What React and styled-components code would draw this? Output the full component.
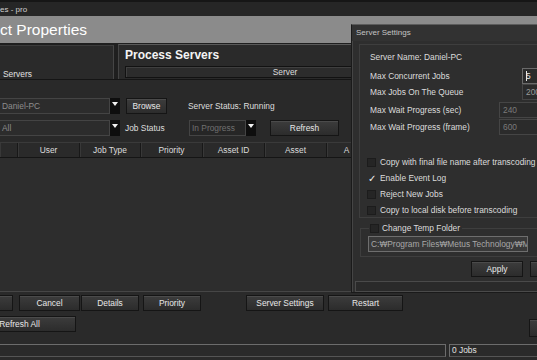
import React from "react";
import styled, { createGlobalStyle } from "styled-components";

const Global = createGlobalStyle`
  html, body {
    margin: 0;
    padding: 0;
    background: #2a2a2a;
  }
  body {
    font-family: "Liberation Sans", Arial, sans-serif;
    font-size: 8.4px;
    color: #dcdcdc;
  }
`;

function Arrow() {
  return (
    <ArrowBox>
      <svg width="8" height="8" viewBox="0 0 8 8">
        <polygon points="1,2 7,2 4,6" fill="#f2f2f2" />
      </svg>
    </ArrowBox>
  );
}

function Select({ value, width, dim }) {
  return (
    <SelectWrap style={{ width }}>
      <SelectField $dim={dim}>{value}</SelectField>
      <Arrow />
    </SelectWrap>
  );
}

function Check({ checked, label }) {
  return (
    <CheckRow>
      {checked ? <Tick>✓</Tick> : <Box />}
      <span>{label}</span>
    </CheckRow>
  );
}

const columns = [
  { label: "", width: 18 },
  { label: "User", width: 62 },
  { label: "Job Type", width: 61 },
  { label: "Priority", width: 62 },
  { label: "Asset ID", width: 62 },
  { label: "Asset", width: 62 },
  { label: "A", width: 40 },
];

function App() {
  return (
    <Screen>
      <Global />
      <TitleBar>es - pro</TitleBar>
      <Banner>ct Properties</Banner>

      <TopArea>
        <ServersPanel>
          <span>Servers</span>
        </ServersPanel>
        <ProcessPanel>
          <PanelTitle>Process Servers</PanelTitle>
          <ColumnHead>Server</ColumnHead>
        </ProcessPanel>
      </TopArea>

      <Controls>
        <Row>
          <Select value="Daniel-PC" width={120} />
          <Button $w={41} $ml={6}>Browse</Button>
          <Label $ml={21}>Server Status: Running</Label>
        </Row>
        <Row>
          <Select value="All" width={120} />
          <Label $ml={5} $w={64}>Job Status</Label>
          <Select value="In Progress" width={67} dim />
          <Button $w={69} $ml={14}>Refresh</Button>
        </Row>
      </Controls>

      <Table>
        <HeadRow>
          {columns.map((c, i) => (
            <HeadCell key={i} $w={c.width}>
              {c.label}
            </HeadCell>
          ))}
        </HeadRow>
        <TableBody />
      </Table>

      <ButtonRow>
        <Button $w={53} $ml={-40} />
        <Button $w={61} $ml={6}>Cancel</Button>
        <Button $w={58} $ml={1}>Details</Button>
        <Button $w={58} $ml={4}>Priority</Button>
        <Button $w={78} $ml={45}>Server Settings</Button>
        <Button $w={75} $ml={4}>Restart</Button>
      </ButtonRow>
      <ButtonRow $mt={5}>
        <Button $w={113} $ml={-37}>Refresh All</Button>
        <Button $w={30} $ml={453} $h={18} $mt={3} />
      </ButtonRow>

      <StatusBar>
        <StatusField $w={447} $ml={-1} />
        <StatusField $w={95}>0 Jobs</StatusField>
      </StatusBar>

      <Dialog>
        <DialogTitle>Server Settings</DialogTitle>
        <DialogContent>
          <GroupBox>
            <NameRow>Server Name: Daniel-PC</NameRow>
            <FieldRow $mt={4}>
              <span>Max Concurrent Jobs</span>
              <NumInput $w={40} $active>
                <Caret />5
              </NumInput>
            </FieldRow>
            <FieldRow $mt={0}>
              <span>Max Jobs On The Queue</span>
              <NumInput $w={40}>200</NumInput>
            </FieldRow>
            <FieldRow $mt={2}>
              <span>Max Wait Progress (sec)</span>
              <NumInput $w={63} $disabled>240</NumInput>
            </FieldRow>
            <FieldRow $mt={1}>
              <span>Max Wait Progress (frame)</span>
              <NumInput $w={63} $disabled>600</NumInput>
            </FieldRow>
            <Checks>
              <Check label="Copy with final file name after transcoding" />
              <Check checked label="Enable Event Log" />
              <Check label="Reject New Jobs" />
              <Check label="Copy to local disk before transcoding" />
            </Checks>
          </GroupBox>

          <TempGroup>
            <TempLegend>
              <Box />
              <span>Change Temp Folder</span>
            </TempLegend>
            <PathInput>C:₩Program Files₩Metus Technology₩Metus</PathInput>
          </TempGroup>

          <DialogButtons>
            <Button $w={52}>Apply</Button>
            <Button $w={52} $ml={7}>Cancel</Button>
          </DialogButtons>
        </DialogContent>
        <DialogFooter />
      </Dialog>
    </Screen>
  );
}

const Screen = styled.div`
  position: relative;
  width: 537px;
  height: 360px;
  overflow: hidden;
  background: #2a2a2a;
`;

const TitleBar = styled.div`
  height: 14px;
  border-top: 2px solid #161616;
  background: #262626;
  color: #cfcfcf;
  font-size: 8px;
  line-height: 15px;
  white-space: nowrap;
`;

const Banner = styled.div`
  height: 27px;
  background: #8b8b8b;
  color: #fff;
  font-size: 15.5px;
  line-height: 27px;
  white-space: nowrap;
`;

const TopArea = styled.div`
  display: flex;
  height: 36px;
  padding-top: 1px;
  box-sizing: border-box;
  background: #1f1f1f;
  gap: 4px;
`;

const ServersPanel = styled.div`
  width: 113px;
  margin-top: 1px;
  background: #2a2a2a;
  border-top: 1px solid #3c3c3c;
  border-right: 1px solid #454545;
  display: flex;
  align-items: flex-end;
  overflow: hidden;
  span {
    padding-left: 3px;
    margin-bottom: 0;
    line-height: 10px;
    color: #e0e0e0;
  }
`;

const ProcessPanel = styled.div`
  flex: 1;
  background: #2a2a2a;
  border-top: 1px solid #5a5a5a;
  border-left: 1px solid #444;
  padding-left: 6px;
  overflow: hidden;
`;

const PanelTitle = styled.div`
  font-size: 12px;
  font-weight: bold;
  color: #f4f4f4;
  height: 21px;
  line-height: 20px;
  white-space: nowrap;
`;

const ColumnHead = styled.div`
  width: 320px;
  height: 12px;
  box-sizing: border-box;
  border: 1px solid #121212;
  box-shadow: inset 1px 1px 0 #3f3f3f;
  background: #2c2c2c;
  text-align: center;
  line-height: 11px;
  color: #dcdcdc;
`;

const Controls = styled.div`
  height: 62px;
  box-sizing: border-box;
  border-top: 1px solid #151515;
  background: #292929;
  padding-top: 18px;
  display: flex;
  flex-direction: column;
  gap: 6px;
`;

const Row = styled.div`
  display: flex;
  align-items: center;
  height: 16px;
`;

const Label = styled.span`
  margin-left: ${(p) => p.$ml || 0}px;
  width: ${(p) => (p.$w ? `${p.$w}px` : "auto")};
  flex-shrink: 0;
  white-space: nowrap;
  color: #dedede;
`;

const SelectWrap = styled.div`
  display: flex;
  height: 16px;
  flex-shrink: 0;
`;

const SelectField = styled.div`
  flex: 1;
  box-sizing: border-box;
  background: ${(p) => (p.$dim ? "#262626" : "#2c2c2c")};
  border: 1px solid #444;
  border-left: ${(p) => (p.$dim ? "1px solid #444" : "none")};
  padding-left: 2px;
  line-height: 14px;
  color: ${(p) => (p.$dim ? "#707070" : "#8c8c8c")};
  white-space: nowrap;
  overflow: hidden;
`;

const ArrowBox = styled.div`
  width: 10px;
  background: #0e0e0e;
  display: flex;
  align-items: flex-start;
  justify-content: center;
  padding-top: 2px;
  box-sizing: border-box;
`;

const Button = styled.div`
  width: ${(p) => p.$w}px;
  height: ${(p) => p.$h || 16}px;
  margin-left: ${(p) => p.$ml || 0}px;
  margin-top: ${(p) => p.$mt || 0}px;
  flex-shrink: 0;
  box-sizing: border-box;
  background: linear-gradient(#3c3c3c, #2c2c2c);
  border: 1px solid #151515;
  box-shadow: inset 0 1px 0 #4b4b4b;
  color: #e8e8e8;
  text-align: center;
  line-height: 14px;
  white-space: nowrap;
`;

const Table = styled.div`
  margin-top: 1px;
  width: 360px;
  border-top: 1px solid #3a3a3a;
  border-bottom: 1px solid #464646;
`;

const HeadRow = styled.div`
  display: flex;
  height: 14px;
  background: #2a2a2a;
  border-bottom: 1px solid #151515;
`;

const HeadCell = styled.div`
  width: ${(p) => p.$w}px;
  flex-shrink: 0;
  box-sizing: border-box;
  border-right: 1px solid #181818;
  box-shadow: inset 1px 0 0 #383838;
  text-align: center;
  line-height: 14px;
  color: #dcdcdc;
`;

const TableBody = styled.div`
  height: 133px;
  background: #2d2d2d;
`;

const ButtonRow = styled.div`
  display: flex;
  margin-top: ${(p) => (p.$mt === undefined ? 3 : p.$mt)}px;
  height: 16px;
`;

const StatusBar = styled.div`
  display: flex;
  margin-top: 12px;
  gap: 3px;
`;

const StatusField = styled.div`
  width: ${(p) => p.$w}px;
  margin-left: ${(p) => p.$ml || 0}px;
  height: 13px;
  flex-shrink: 0;
  box-sizing: border-box;
  border: 1px solid #6c6c6c;
  border-bottom-color: #555;
  background: #2a2a2a;
  padding-left: 2px;
  line-height: 11px;
  color: #e0e0e0;
`;

const Dialog = styled.div`
  position: absolute;
  left: 351px;
  top: 24px;
  width: 230px;
  height: 269px;
  box-sizing: border-box;
  background: #2e2e2e;
  border: 1px solid #1a1a1a;
  border-top-color: #5c5c5c;
  box-shadow: inset 1px 0 0 #454545;
  display: flex;
  flex-direction: column;
`;

const DialogTitle = styled.div`
  height: 16px;
  padding-left: 4px;
  line-height: 16px;
  font-size: 8px;
  color: #c4c4c4;
  background: #323232;
`;

const DialogContent = styled.div`
  padding: 3px 0 0 7px;
`;

const GroupBox = styled.div`
  height: 174px;
  box-sizing: border-box;
  border: 1px solid #3e3e3e;
  border-right: none;
  padding: 5px 0 0 10px;
  display: flex;
  flex-direction: column;
`;

const NameRow = styled.div`
  height: 14px;
  line-height: 14px;
`;

const FieldRow = styled.div`
  display: flex;
  justify-content: space-between;
  align-items: center;
  height: 16px;
  margin-top: ${(p) => p.$mt}px;
  padding-right: 18px;
  white-space: nowrap;
`;

const NumInput = styled.div`
  position: relative;
  width: ${(p) => p.$w}px;
  height: 16px;
  box-sizing: border-box;
  border: 1px solid ${(p) => (p.$active ? "#6a6a6a" : "#454545")};
  background: #2b2b2b;
  padding-left: 3px;
  line-height: 14px;
  color: ${(p) => (p.$active ? "#e6e6e6" : p.$disabled ? "#7a7a7a" : "#9a9a9a")};
`;

const Caret = styled.span`
  position: absolute;
  left: 3px;
  top: 2px;
  width: 1px;
  height: 10px;
  background: #e6e6e6;
`;

const Checks = styled.div`
  margin-top: 19px;
  display: flex;
  flex-direction: column;
`;

const CheckRow = styled.div`
  display: flex;
  align-items: center;
  height: 16px;
  margin-left: -3px;
  gap: 4px;
  white-space: nowrap;
`;

const Box = styled.span`
  width: 9px;
  height: 9px;
  flex-shrink: 0;
  background: #252525;
  border: 1px solid #1c1c1c;
  box-sizing: border-box;
`;

const Tick = styled.span`
  width: 9px;
  text-align: center;
  font-size: 10px;
  line-height: 9px;
  color: #f0f0f0;
`;

const TempGroup = styled.fieldset`
  margin: 4px 0 0 1px;
  padding: 2px 8px 4px 7px;
  border: 1px solid #3e3e3e;
  border-right: none;
  min-width: 0;
`;

const TempLegend = styled.legend`
  display: flex;
  align-items: center;
  gap: 3px;
  height: 12px;
  padding: 0 2px 0 1px;
  margin-left: 1px;
  white-space: nowrap;
`;

const PathInput = styled.div`
  width: 160px;
  height: 16px;
  box-sizing: border-box;
  border: 1px solid #6e6e6e;
  background: #393939;
  padding-left: 2px;
  line-height: 14px;
  color: #a8a8a8;
  white-space: nowrap;
  overflow: hidden;
`;

const DialogButtons = styled.div`
  display: flex;
  margin-top: 4px;
  padding-left: 112px;
`;

const DialogFooter = styled.div`
  margin: 4px 0 0 3px;
  height: 11px;
  border: 1px solid #4a4a4a;
  border-right: none;
  background: #2a2a2a;
`;

export default App;
